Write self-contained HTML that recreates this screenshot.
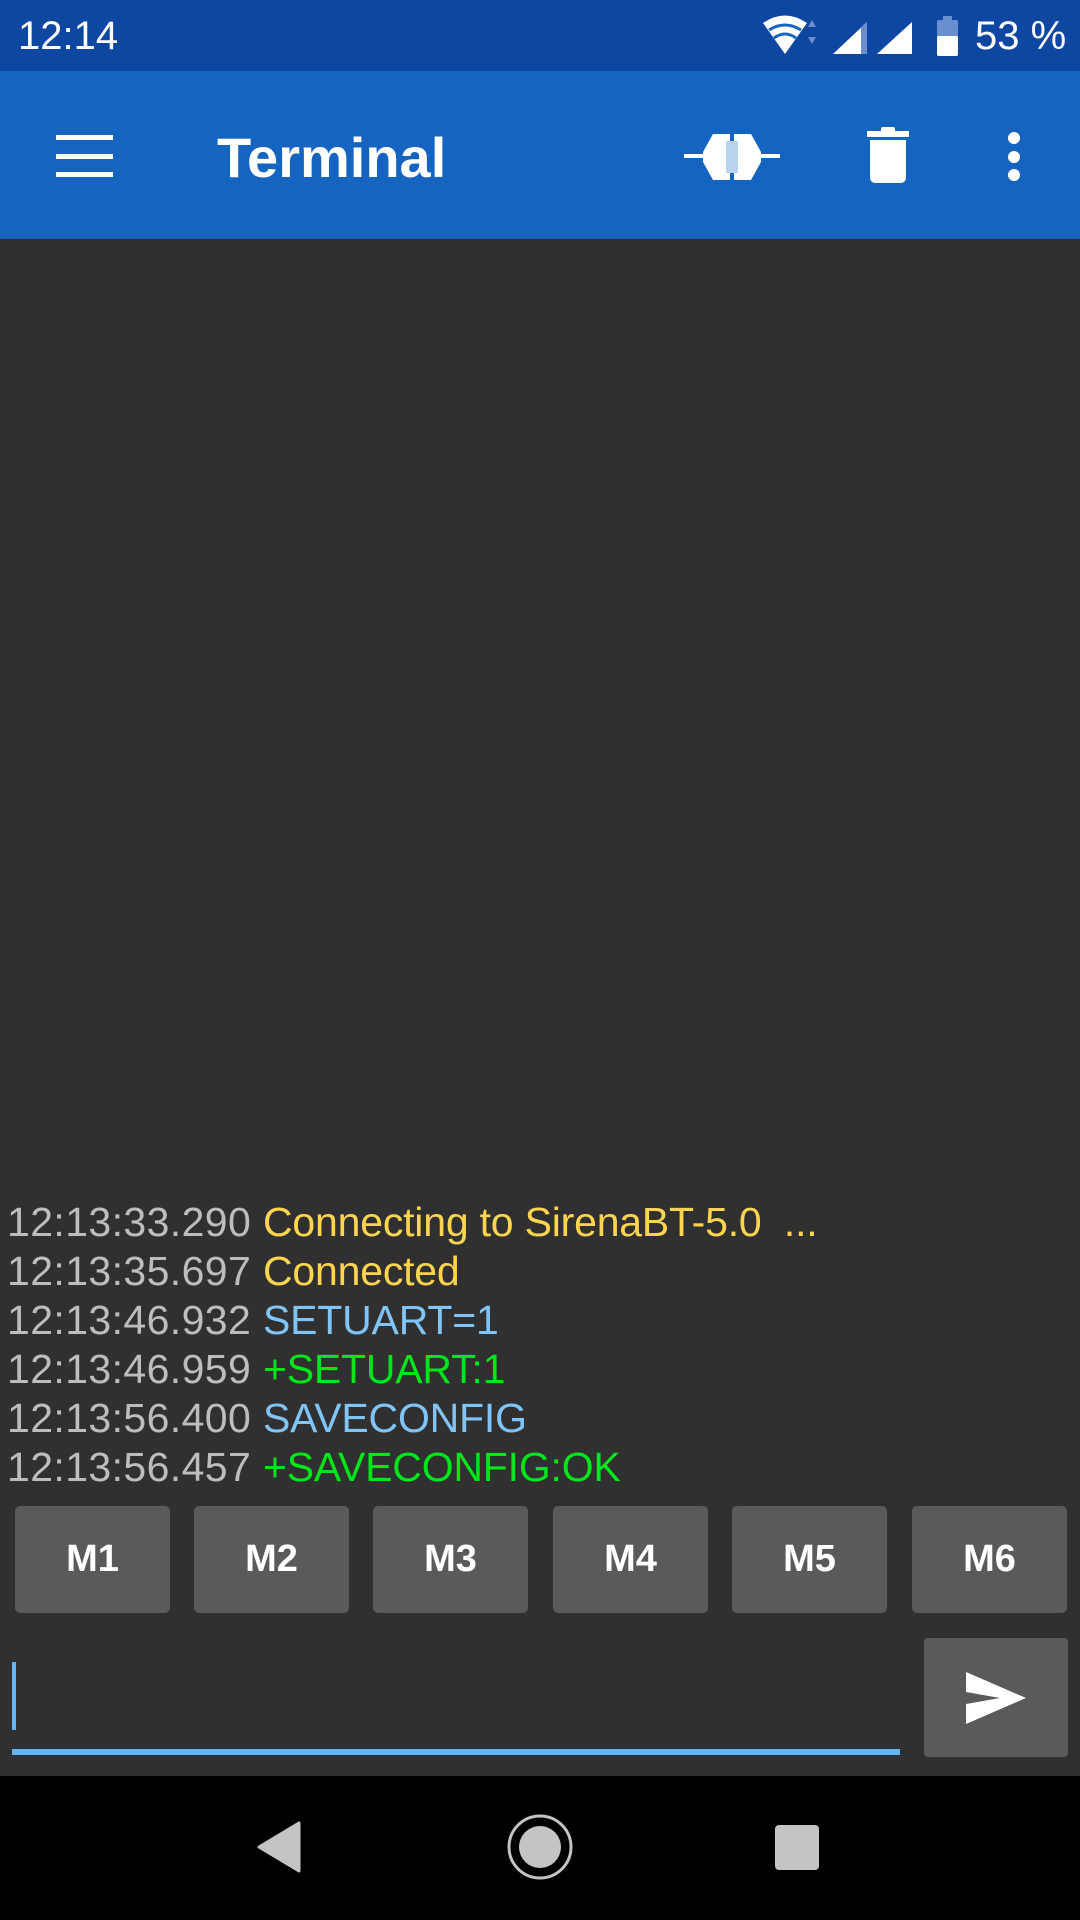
<!DOCTYPE html>
<html><head><meta charset="utf-8"><style>
*{margin:0;padding:0;box-sizing:border-box}
body{width:1080px;height:1920px;overflow:hidden;background:#303030;font-family:"Liberation Sans",sans-serif;position:relative}
.abs{position:absolute}
#sb{left:0;top:0;width:1080px;height:71px;background:#0D47A1}
#tb{left:0;top:71px;width:1080px;height:168px;background:#1565C0}
#nav{left:0;top:1776px;width:1080px;height:144px;background:#000}
.log{left:7px;top:1198px;font-size:41px;line-height:49px;color:#bdbdbd;white-space:pre;letter-spacing:0.4px}
.y{color:#FFD54F}.b{color:#81C4F8}.g{color:#00E61A}
.msg{letter-spacing:-0.2px}
.btn{top:1506px;width:155px;height:107px;background:#5a5a5a;border-radius:5px;color:#fff;font-size:38px;font-weight:bold;text-align:center;line-height:107px}
</style></head><body>
<div id="sb" class="abs"></div>
<div class="abs" style="left:18px;top:14px;color:#fff;font-size:40px;line-height:44px">12:14</div>
<svg class="abs" style="left:755px;top:14px" width="220" height="44" viewBox="0 0 220 44">
<path d="M8 9 Q30 -6 52 9 L30 40 Z" fill="#fff"/>
<path d="M14 16 Q30 6 46 16" stroke="#1565C0" stroke-width="3" fill="none"/>
<path d="M19 24 Q30 16 41 24" stroke="#1565C0" stroke-width="3" fill="none"/>
<path d="M57 6 L61 13 L53 13Z M57 30 L61 23 L53 23Z" fill="#6a8fd0"/>
<path d="M78 40 L112 8 L112 40Z" fill="#fff"/>
<path d="M106 13 L112 8 L112 40 L106 40Z" fill="#6a8fd0"/>
<path d="M122 40 L157 8 L157 40Z" fill="#fff"/>
<rect x="182" y="6" width="21" height="36" rx="2" fill="#6a8fd0"/><rect x="188" y="2" width="9" height="5" fill="#6a8fd0"/>
<rect x="182" y="22" width="21" height="20" rx="2" fill="#fff"/>
</svg>
<div class="abs" style="left:975px;top:14px;color:#fff;font-size:40px;line-height:44px">53 %</div>
<div id="tb" class="abs"></div>
<div class="abs" style="left:56px;top:135px;width:57px;height:5px;background:#fff"></div>
<div class="abs" style="left:56px;top:154px;width:57px;height:5px;background:#fff"></div>
<div class="abs" style="left:56px;top:172px;width:57px;height:5px;background:#fff"></div>
<div class="abs" style="left:217px;top:128px;color:#fff;font-size:56px;font-weight:bold;line-height:60px">Terminal</div>
<svg class="abs" style="left:682px;top:130px" width="100" height="55" viewBox="0 0 100 55">
<rect x="2" y="24" width="96" height="4" fill="#fff"/>
<path d="M21 22 L31 4 L48 4 L48 50 L31 50 L21 32Z" fill="#fff"/>
<path d="M79 22 L69 4 L52 4 L52 50 L69 50 L79 32Z" fill="#fff"/>
<rect x="44" y="11" width="12" height="32" fill="#b9d2ee"/>
</svg>
<svg class="abs" style="left:866px;top:127px" width="44" height="58" viewBox="0 0 44 58">
<rect x="1" y="4" width="42" height="6" fill="#fff"/><rect x="15" y="0" width="14" height="6" rx="2" fill="#fff"/>
<path d="M4 13 H40 V50 Q40 56 34 56 H10 Q4 56 4 50Z" fill="#fff"/>
</svg>
<div class="abs" style="left:1008px;top:132px;width:12px;height:12px;border-radius:6px;background:#fff"></div>
<div class="abs" style="left:1008px;top:151px;width:12px;height:12px;border-radius:6px;background:#fff"></div>
<div class="abs" style="left:1008px;top:169px;width:12px;height:12px;border-radius:6px;background:#fff"></div>
<div class="abs log">12:13:33.290 <span class="y msg">Connecting to SirenaBT-5.0  ...</span>
12:13:35.697 <span class="y msg">Connected</span>
12:13:46.932 <span class="b msg">SETUART=1</span>
12:13:46.959 <span class="g msg">+SETUART:1</span>
12:13:56.400 <span class="b msg">SAVECONFIG</span>
12:13:56.457 <span class="g msg">+SAVECONFIG:OK</span></div>
<div class="abs btn" style="left:15px">M1</div>
<div class="abs btn" style="left:194px">M2</div>
<div class="abs btn" style="left:373px">M3</div>
<div class="abs btn" style="left:553px">M4</div>
<div class="abs btn" style="left:732px">M5</div>
<div class="abs btn" style="left:912px">M6</div>
<div class="abs" style="left:12px;top:1662px;width:4px;height:68px;background:#64B5F6"></div>
<div class="abs" style="left:12px;top:1749px;width:888px;height:6px;background:#64B5F6"></div>
<div class="abs" style="left:924px;top:1638px;width:144px;height:119px;background:#5a5a5a;border-radius:4px"></div>
<svg class="abs" style="left:964px;top:1670px" width="64" height="56" viewBox="0 0 64 56">
<path d="M2 2 L62 28 L2 54 L2 34 L36 28 L2 22Z" fill="#fff"/>
</svg>
<div id="nav" class="abs"></div>
<svg class="abs" style="left:250px;top:1810px" width="600" height="76" viewBox="0 0 600 76">
<path d="M9 37 L49 13 L49 61Z" fill="#c4c4c4" stroke="#c4c4c4" stroke-width="3" stroke-linejoin="round"/>
<circle cx="290" cy="37" r="31" fill="none" stroke="#c4c4c4" stroke-width="3"/>
<circle cx="290" cy="37" r="21" fill="#c4c4c4"/>
<rect x="525" y="15" width="44" height="45" rx="4" fill="#c4c4c4"/>
</svg>
</body></html>
